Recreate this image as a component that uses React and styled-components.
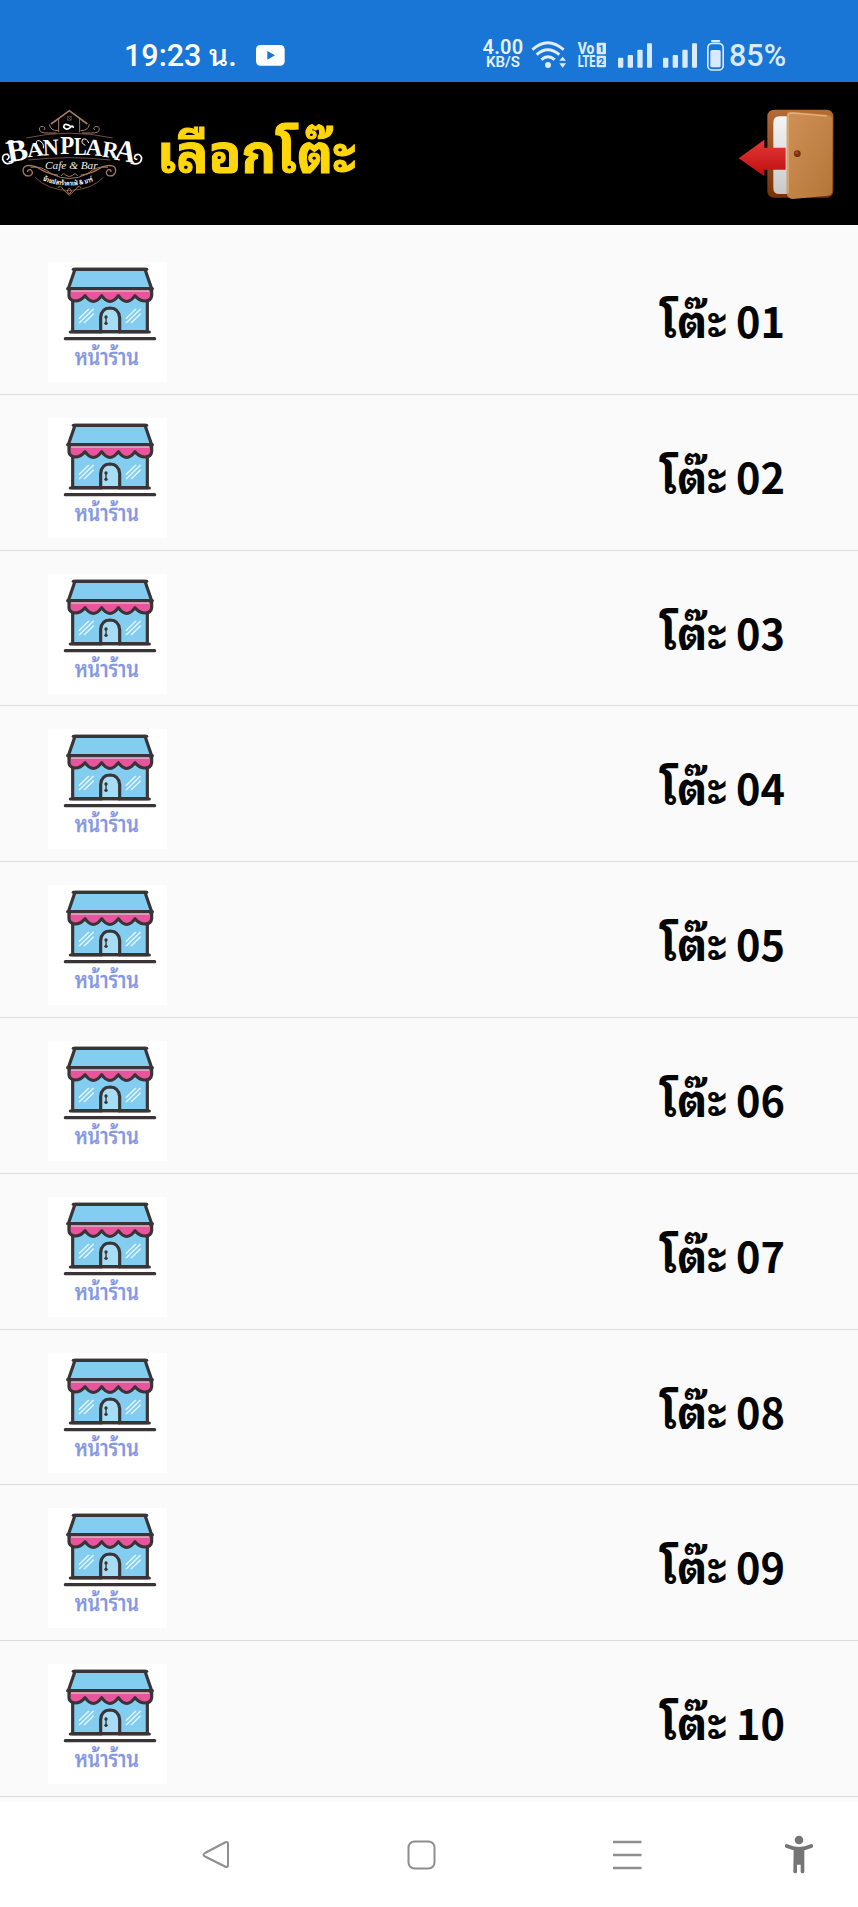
import React from "react";
import styled, { createGlobalStyle } from "styled-components";

const Global = createGlobalStyle`
  * { box-sizing: border-box; }
  body { margin: 0; background: #fff; }
  svg { display: block; flex: none; overflow: visible; }
`;

const thai = `"Noto Sans Thai Looped", Sarabun, Laksaman, Garuda, Loma, Waree, "DejaVu Sans", sans-serif`;

const Screen = styled.div`
  width: 858px;
  height: 1907px;
  display: flex;
  flex-direction: column;
  overflow: hidden;
  background: #fefefe;
  font-family: ${thai};
`;

const StatusBar = styled.div`
  height: 82px;
  flex: none;
  background: #1976d6;
  display: flex;
  align-items: flex-end;
  justify-content: space-between;
  padding: 0 72px 9px 124px;
  color: #fff;
`;

const StatusGroup = styled.div`
  display: flex;
  align-items: center;
  height: 36px;
`;

const Clock = styled.div`
  font: 500 30.5px/36px Roboto, ${thai};
  white-space: nowrap;
  width: 132px;
  padding-top: 1px;
`;

const NetSpeed = styled.div`
  width: 42px;
  margin-right: 7px;
  text-align: center;
  font-family: Roboto, sans-serif;
  font-weight: 600;
  color: #e6f1fd;
`;

const SpeedValue = styled.div`
  font-size: 20px;
  line-height: 15px;
  letter-spacing: 0.3px;
`;

const SpeedUnit = styled.div`
  font-size: 15px;
  line-height: 15px;
`;

const Battery = styled.div`
  font: 500 30.5px/36px Roboto, sans-serif;
  color: #d9eafc;
  margin-left: 5px;
  width: 57px;
  padding-top: 2px;
`;

const Header = styled.header`
  height: 143px;
  flex: none;
  background: #000;
  display: flex;
  align-items: center;
`;

const Title = styled.h1`
  margin: 0 0 9px 14px;
  flex: 1;
  color: #ffd60a;
  font-size: 53.5px;
  font-weight: 700;
  -webkit-text-stroke: 1px #ffd60a;
  line-height: 80px;
  white-space: nowrap;
`;

const ExitButton = styled.div`
  margin-right: 22px;
  margin-top: 1px;
`;

const List = styled.main`
  flex: none;
  background: #fafafa;
  padding: 14px 0 5px;
`;

const Row = styled.div`
  height: 155.8px;
  border-bottom: 1px solid #dcdcdc;
  display: flex;
  justify-content: space-between;
  padding: 23px 73px 0 48px;
`;

const Thumb = styled.div`
  width: 119px;
  height: 120px;
  background: #fff;
`;

const Label = styled.div`
  height: 116px;
  line-height: 116px;
  font-family: "Noto Sans CJK SC", ${thai};
  font-size: 41.5px;
  font-weight: 700;
  color: #050505;
  white-space: nowrap;
`;

const Prefix = styled.span`
  font-family: ${thai};
  font-size: 45px;
  line-height: 1;
`;

const NavBar = styled.nav`
  flex: 1;
  background: #fff;
  display: flex;
  align-items: center;
  padding: 1px 28px 0 202px;
`;

const NavIcon = styled.div`
  margin-right: ${(p) => p.$gap || 0}px;
`;

const Wifi = () => (
  <svg width="36" height="30" viewBox="0 0 108 90" fill="none" stroke="#e0eefc" strokeWidth="8.5">
    <path d="M4 29Q50 -13 98 29M17 44Q50 14 85 44M31 59Q51 41 71 59" />
    <circle cx="51" cy="75" r="9" fill="#e0eefc" stroke="none" />
    <path d="M85 62L95 50L105 62ZM85 70L95 83L105 70Z" fill="#e0eefc" stroke="none" />
  </svg>
);

const VoLte = () => (
  <svg width="30" height="26" viewBox="0 0 90 78" fill="#d9eafc" style={{ marginLeft: 10 }}>
    <g fontFamily="Roboto, sans-serif" fontWeight="800" fontSize="47">
      <text x="2" y="36" textLength="50" lengthAdjust="spacingAndGlyphs">Vo</text>
      <text x="2" y="75" textLength="53" lengthAdjust="spacingAndGlyphs">LTE</text>
    </g>
    <rect x="59" y="2" width="28" height="35" rx="3" />
    <rect x="59" y="41" width="28" height="35" rx="3" />
    <g fill="#1976d6" fontFamily="Roboto, sans-serif" fontWeight="800" fontSize="29" textAnchor="middle">
      <text x="73" y="30">1</text>
      <text x="73" y="69">2</text>
    </g>
  </svg>
);

const Signal = ({ gap }) => (
  <svg width="35" height="25" viewBox="0 0 105 75" fill="#d9eafc" style={{ marginLeft: gap }}>
    <rect x="0" y="44" width="16" height="30" rx="3" />
    <rect x="29" y="36" width="16" height="38" rx="3" />
    <rect x="58" y="20" width="16" height="54" rx="3" />
    <rect x="87" y="1" width="15" height="73" rx="3" />
  </svg>
);

const BatteryIcon = () => (
  <svg width="17" height="31" viewBox="0 0 51 93" style={{ marginLeft: 9 }}>
    <rect x="12" y="0" width="28" height="6" rx="3" fill="#d9eafc" />
    <rect x="2.5" y="10" width="46" height="80" rx="13" fill="none" stroke="#d9eafc" strokeWidth="5" />
    <rect x="10" y="30" width="31" height="52" rx="5" fill="#d9eafc" />
  </svg>
);

const YouTube = () => (
  <svg width="29" height="21" viewBox="0 0 87 63">
    <rect width="86" height="62" rx="13" fill="#fff" />
    <path d="M34 18L57 31L34 44Z" fill="#1976d6" />
  </svg>
);

const Logo = () => (
  <svg width="143" height="93" viewBox="0 50 429 279">
    <g fill="none" stroke="#a87961" strokeWidth="3">
      <path d="M153 101L208 61L262 101" strokeWidth="5" />
      <path d="M176 84V126M239 84V126" />
      <path d="M78 143Q208 114 338 143M85 209Q208 195 331 209" strokeWidth="2" />
      <path d="M170 128H145Q118 129 118 116Q119 106 131 109Q139 112 132 119M246 128H271Q299 129 298 116Q297 106 285 109Q277 112 284 119" />
      <path d="M174 121Q151 121 148 102M242 121Q265 121 268 102" />
      <path d="M174 255Q139 250 110 230Q69 217 69 242Q72 260 91 256Q103 247 92 238Q82 236 83 245M242 255Q277 250 306 230Q347 217 347 242Q344 260 325 256Q313 247 324 238Q334 236 333 245" strokeWidth="4" />
      <path d="M92 231Q125 225 155 251Q208 278 261 251Q291 225 324 231" />
      <path d="M106 261Q140 298 208 301Q276 298 310 261" strokeWidth="2" />
      <path d="M183 257Q190 245 198 255Q208 263 218 255Q226 245 233 257M173 292Q183 284 188 296L208 315L228 296Q235 284 243 292M201 302L208 293L215 302L208 311Z" />
      <path d="M203 79L213 89M213 79L203 89M202 78h12v12h-12z" strokeWidth="1.5" />
    </g>
    <path d="M211 107Q192 96 191 110Q199 122 211 111Q219 103 220 113" fill="none" stroke="#fff" strokeWidth="5" />
    <g fill="#fff" fontFamily="'Liberation Serif', serif" fontWeight="700" textAnchor="middle">
      <text transform="translate(56 211) rotate(-10)" fontSize="92" textLength="64" lengthAdjust="spacingAndGlyphs">B</text>
      <text transform="translate(108 198) rotate(-7)" fontSize="60" textLength="50" lengthAdjust="spacingAndGlyphs">A</text>
      <text transform="translate(154 194) rotate(-3)" fontSize="70" textLength="48" lengthAdjust="spacingAndGlyphs">N</text>
      <text x="202" y="192" fontSize="76" textLength="42" lengthAdjust="spacingAndGlyphs">P</text>
      <text x="241" y="193" fontSize="74" textLength="38" lengthAdjust="spacingAndGlyphs">L</text>
      <text transform="translate(281 195) rotate(4)" fontSize="70" textLength="50" lengthAdjust="spacingAndGlyphs">A</text>
      <text transform="translate(328 202) rotate(8)" fontSize="70" textLength="48" lengthAdjust="spacingAndGlyphs">R</text>
      <text transform="translate(372 213) rotate(10)" fontSize="92" textLength="62" lengthAdjust="spacingAndGlyphs">A</text>
    </g>
    <g fill="none" stroke="#fff" strokeWidth="5">
      <path d="M40 215Q15 228 8 207Q6 190 23 192Q33 202 20 208M22 157Q30 147 43 155M392 218Q423 227 425 203Q421 187 406 195Q399 207 412 207" />
      <path d="M112 166Q103 149 118 151Q133 158 130 174M256 165Q241 158 248 147Q260 142 266 158" strokeWidth="3" />
    </g>
    <text x="214" y="235" fill="#f2f2f2" fontFamily="'Liberation Serif', serif" fontStyle="italic" fontSize="33" textAnchor="middle" textLength="158" lengthAdjust="spacingAndGlyphs">Cafe &amp; Bar</text>
    <path id="ribbon" d="M128 270Q208 302 288 269" fill="none" />
    <text fill="#fff" fontFamily={thai} fontWeight="700" fontSize="20">
      <textPath href="#ribbon" textLength="156" lengthAdjust="spacingAndGlyphs">บ้านปลาร้าคาเฟ่ &amp; บาร์</textPath>
    </text>
  </svg>
);

const ExitIcon = () => (
  <svg width="100" height="96" viewBox="920 315 300 288">
    <defs>
      <linearGradient id="frame" x2="0" y2="1">
        <stop offset="0" stopColor="#b56b34" />
        <stop offset="1" stopColor="#783009" />
      </linearGradient>
      <linearGradient id="door" x2="1" y2="1">
        <stop offset="0" stopColor="#cf9156" />
        <stop offset="1" stopColor="#b47638" />
      </linearGradient>
      <linearGradient id="gap" x2="0" y2="1">
        <stop offset="0" stopColor="#f5f5f5" />
        <stop offset="1" stopColor="#c9c9c9" />
      </linearGradient>
      <linearGradient id="arrow" x2="0" y2="1">
        <stop offset="0" stopColor="#e63a36" />
        <stop offset="1" stopColor="#bd0d10" />
      </linearGradient>
    </defs>
    <rect x="1014" y="326" width="198" height="264" rx="20" fill="url(#frame)" />
    <path d="M1075 346H1050Q1032 346 1032 366V560Q1032 579 1050 579H1075Z" fill="url(#gap)" />
    <path d="M1072 342Q1074 331 1087 332L1194 341Q1209 343 1209 358V569Q1209 582 1194 584L1090 594Q1074 593 1072 577Z" fill="url(#door)" />
    <path d="M1076 577V345Q1077 336 1088 336L1192 345" fill="none" stroke="#e2ae77" strokeWidth="4" />
    <path d="M928 472L1005 416V440H1069V506H1005V526Z" fill="url(#arrow)" />
    <circle cx="1104" cy="458" r="10" fill="#7c2f0c" />
    <circle cx="1102" cy="455" r="4" fill="#a85026" />
  </svg>
);

const Shop = () => (
  <svg width="119" height="120" viewBox="24 37 357 360">
    <g stroke="#3a3436" strokeWidth="9.5" strokeLinejoin="round" strokeLinecap="round">
      <rect x="98" y="125" width="224" height="121" fill="#83cdf0" />
      <path d="M105 59H315L335 117H85Z" fill="#83cdf0" />
      <path d="M100 59H320" />
      <path d="M87 120H335V138Q333 153 316 154Q298 154 285 138Q260 173 235 138Q210 173 185 138Q160 173 135 138Q122 154 105 154Q87 151 87 138Z" fill="#e8559c" />
      <path d="M83 117H337" />
      <path d="M182 246V204Q183 176 210 175Q237 176 239 204V246Z" fill="#a6ddf5" />
      <path d="M91 247H183M238 247H328M76 267H344" />
      <path d="M198 202V220" strokeWidth="4" />
    </g>
    <circle cx="198" cy="202" r="5" fill="#3a3436" />
    <circle cx="198" cy="221" r="5" fill="#3a3436" />
    <path d="M93 124H328" stroke="#f3b9d3" strokeWidth="4" />
    <path d="M118 206L146 179M118 219L160 179M133 219L160 193M259 206L287 179M259 219L301 179M274 219L301 193" stroke="#e6f7ff" strokeWidth="4" strokeLinecap="round" />
    <text x="104" y="345" fill="#8296e3" stroke="#8296e3" strokeWidth="1" fontFamily={thai} fontWeight="500" fontSize="66" textLength="193" lengthAdjust="spacingAndGlyphs">หน้าร้าน</text>
  </svg>
);

const tables = ["01", "02", "03", "04", "05", "06", "07", "08", "09", "10"];

export default function App() {
  return (
    <Screen>
      <Global />
      <StatusBar>
        <StatusGroup>
          <Clock>19:23 น.</Clock>
          <YouTube />
        </StatusGroup>
        <StatusGroup>
          <NetSpeed>
            <SpeedValue>4.00</SpeedValue>
            <SpeedUnit>KB/S</SpeedUnit>
          </NetSpeed>
          <Wifi />
          <VoLte />
          <Signal gap={11} />
          <Signal gap={10} />
          <BatteryIcon />
          <Battery>85%</Battery>
        </StatusGroup>
      </StatusBar>
      <Header>
        <Logo />
        <Title>เลือกโต๊ะ</Title>
        <ExitButton>
          <ExitIcon />
        </ExitButton>
      </Header>
      <List>
        {tables.map((n) => (
          <Row key={n}>
            <Thumb>
              <Shop />
            </Thumb>
            <Label>
              <Prefix>โต๊ะ</Prefix> {n}
            </Label>
          </Row>
        ))}
      </List>
      <NavBar>
        <NavIcon $gap={176}>
          <svg width="29" height="29" viewBox="0 0 29 29" fill="none" stroke="#8e8e8e" strokeWidth="2" strokeLinejoin="round">
            <path d="M3 13L23 2.5Q26 1 26 4V25Q26 28 23 26.500L3 16.500Q0 14.700 3 13Z" />
          </svg>
        </NavIcon>
        <NavIcon $gap={176}>
          <svg width="30" height="30" viewBox="0 0 30 30" fill="none" stroke="#8e8e8e" strokeWidth="2">
            <rect x="1.500" y="1.500" width="26" height="27" rx="6" />
          </svg>
        </NavIcon>
        <NavIcon $gap={142}>
          <svg width="30" height="30" viewBox="0 0 30 30" stroke="#8e8e8e" strokeWidth="2.400">
            <path d="M0 2H28.500M0 15H28.500M0 28H28.500" />
          </svg>
        </NavIcon>
        <NavIcon>
          <svg width="30" height="39" viewBox="0 0 90 117" fill="#757575">
            <circle cx="42" cy="15" r="13" />
            <path d="M26 40H58V110Q58 115 53 115Q47 115 47 110V89H36V110Q36 115 31 115Q25 115 25 110Z" />
            <path d="M5 33Q42 50 79 33" fill="none" stroke="#757575" strokeWidth="11" strokeLinecap="round" />
          </svg>
        </NavIcon>
      </NavBar>
    </Screen>
  );
}
